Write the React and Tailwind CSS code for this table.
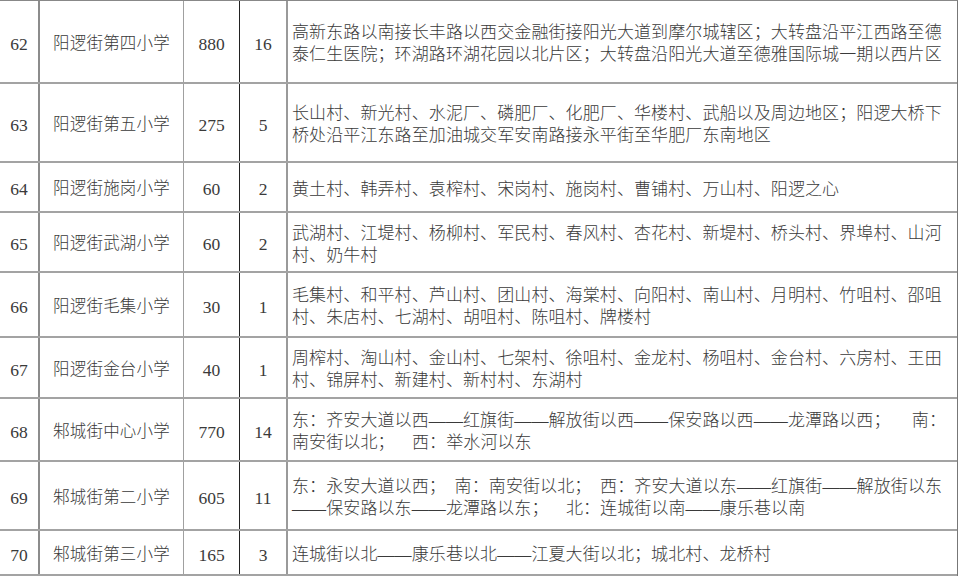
import React from 'react';

const rows = [
  {
    no: '62', name: '阳逻街第四小学', a: '880', b: '16', h: 'h-[83px]',
    lines: [
      '高新东路以南接长丰路以西交金融街接阳光大道到摩尔城辖区；大转盘沿平江西路至德',
      '泰仁生医院；环湖路环湖花园以北片区；大转盘沿阳光大道至德雅国际城一期以西片区',
    ],
  },
  {
    no: '63', name: '阳逻街第五小学', a: '275', b: '5', h: 'h-[79px]',
    lines: [
      '长山村、新光村、水泥厂、磷肥厂、化肥厂、华楼村、武船以及周边地区；阳逻大桥下',
      '桥处沿平江东路至加油城交军安南路接永平街至华肥厂东南地区',
    ],
  },
  {
    no: '64', name: '阳逻街施岗小学', a: '60', b: '2', h: 'h-[50px]',
    lines: ['黄土村、韩弄村、袁榨村、宋岗村、施岗村、曹铺村、万山村、阳逻之心'],
  },
  {
    no: '65', name: '阳逻街武湖小学', a: '60', b: '2', h: 'h-[60px]',
    lines: ['武湖村、江堤村、杨柳村、军民村、春风村、杏花村、新堤村、桥头村、界埠村、山河', '村、奶牛村'],
  },
  {
    no: '66', name: '阳逻街毛集小学', a: '30', b: '1', h: 'h-[65px]',
    lines: ['毛集村、和平村、芦山村、团山村、海棠村、向阳村、南山村、月明村、竹咀村、邵咀', '村、朱店村、七湖村、胡咀村、陈咀村、牌楼村'],
  },
  {
    no: '67', name: '阳逻街金台小学', a: '40', b: '1', h: 'h-[61px]',
    lines: ['周榨村、淘山村、金山村、七架村、徐咀村、金龙村、杨咀村、金台村、六房村、王田', '村、锦屏村、新建村、新村村、东湖村'],
  },
  {
    no: '68', name: '邾城街中心小学', a: '770', b: '14', h: 'h-[63px]', split: true,
    lines: ['南安街以北；    西：举水河以东'],
  },
  {
    no: '69', name: '邾城街第二小学', a: '605', b: '11', h: 'h-[69px]',
    lines: ['东：永安大道以西；  南：南安街以北；  西：齐安大道以东——红旗街——解放街以东', '——保安路以东——龙潭路以东；    北：连城街以南——康乐巷以南'],
  },
  {
    no: '70', name: '邾城街第三小学', a: '165', b: '3', h: 'h-[45px]',
    lines: ['连城街以北——康乐巷以北——江夏大街以北；城北村、龙桥村'],
  },
];

const font = "font-['Liberation_Serif','Noto_Sans_CJK_SC',serif]";

export default function App() {
  return (
    <div className={`w-[960px] h-[577px] bg-white text-[#3a3a3a] ${font} overflow-hidden`}>
      <div className="w-[958px] border-t border-[#888] border-r border-r-[#777]">
        {rows.map((r) => (
          <div
            key={r.no}
            className={`grid grid-cols-[40px_144px_56px_48px_1fr] border-b-2 border-[#a3a3a3] ${r.h}`}
          >
            <div className="flex items-center justify-center pt-[5px] border-r-2 border-[#8c8c8c] text-[17.5px]">{r.no}</div>
            <div className="flex items-center justify-center pt-[5px] border-r border-[#a0a0a0] text-[16.5px] font-light tracking-[0.2px]">{r.name}</div>
            <div className="flex items-center justify-center pt-[5px] border-r border-[#222] text-[17.5px]">{r.a}</div>
            <div className="flex items-center justify-center pt-[5px] border-r-2 border-[#9a9a9a] text-[17.5px]">{r.b}</div>
            <div className="flex flex-col justify-center pt-[5px] pl-[4px] text-[17px] font-light leading-[22px] tracking-[0.1px]">
              {r.split && (
                <div className="flex w-[654px] justify-between whitespace-nowrap">
                  <span>东：齐安大道以西——红旗街——解放街以西——保安路以西——龙潭路以西；</span>
                  <span>南：</span>
                </div>
              )}
              {r.lines.map((l, i) => (
                <div key={i} className="whitespace-pre">{l}</div>
              ))}
            </div>
          </div>
        ))}
      </div>
    </div>
  );
}
